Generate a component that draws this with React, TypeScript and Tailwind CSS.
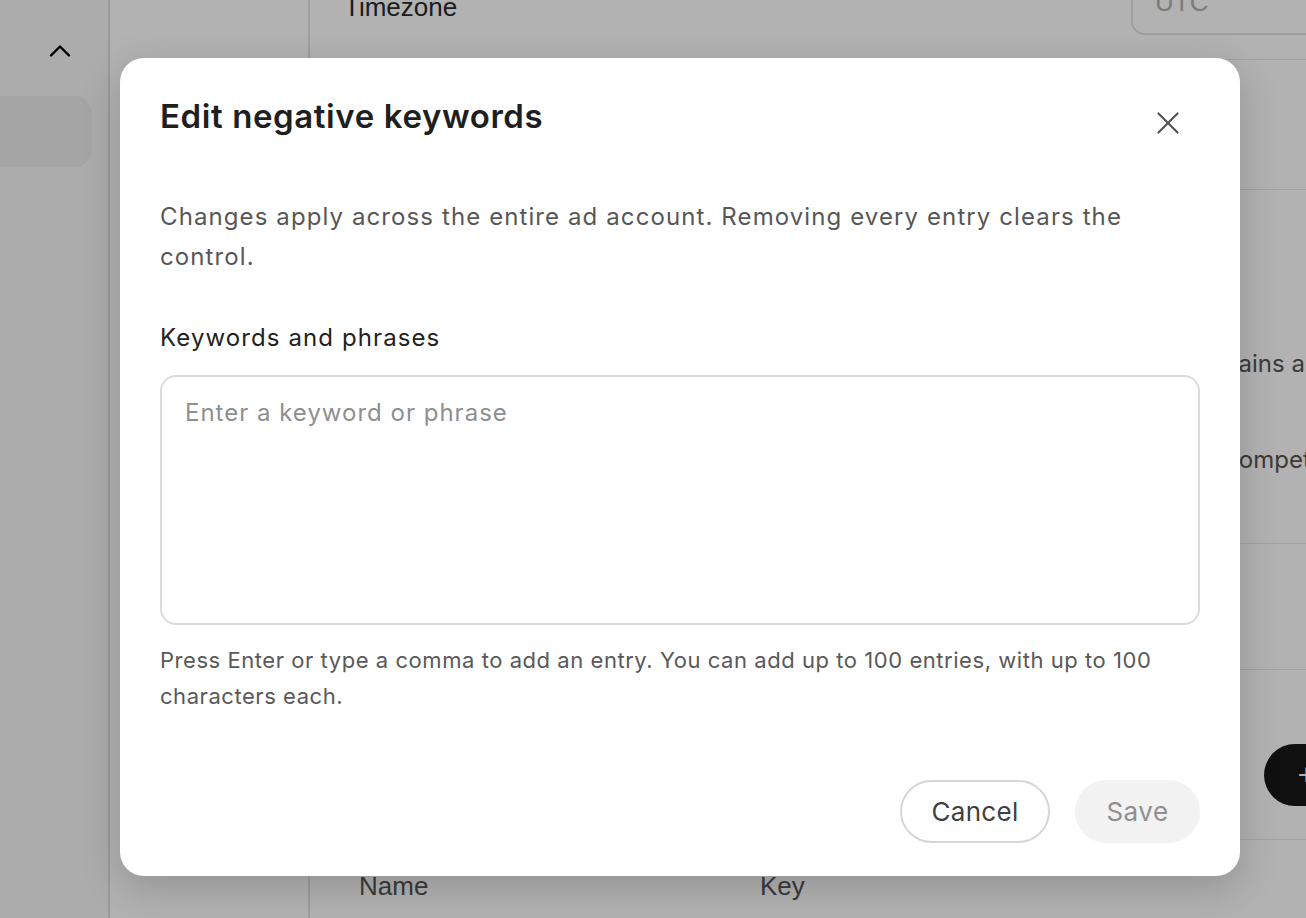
import { ChevronUp } from "lucide-react";

const inter = { fontFamily: "Inter, 'Noto Sans', sans-serif" };

export default function App() {
  return (
    <div
      className="relative w-[1306px] h-[918px] overflow-hidden bg-white"
      style={{ fontFamily: "'Liberation Sans', Arial, sans-serif" }}
    >
      {/* page behind the dialog */}
      <div className="flex h-full">
        <aside className="w-[110px] shrink-0 bg-[#f7f7f7] border-r-2 border-[#dcdcdc] pt-[33px]">
          <div className="flex justify-end pr-[30px]">
            <ChevronUp size={36} strokeWidth={1.6} className="text-black" />
          </div>
          <div className="mt-[27px] mr-[16px] h-[71px] rounded-r-[18px] bg-[#ececec]" />
        </aside>
        <nav className="w-[200px] shrink-0 border-r-2 border-[#e3e3e3]" />
        <main className="w-[1100px] shrink-0 -mt-[40px] text-[#2a2a2a]">
          <div className="h-[100px] flex items-center justify-between pl-[34px] pr-[36px] border-b border-[#e8e8e8]">
            <span className="text-[26px] mt-[-4px]">Timezone</span>
            <div className="w-[243px] h-[64px] mt-[-14px] rounded-[14px] border-2 border-[#e3e3e3] flex items-center px-[22px] text-[26px] text-[#b0b0b0]">
              UTC
            </div>
          </div>
          <div className="h-[130px] border-b border-[#e8e8e8]" />
          <div className="h-[354px] border-b border-[#e8e8e8] pl-[36px] pt-[156px]" style={inter}>
            <p className="text-[24px] leading-[36px] text-[#555] whitespace-nowrap pl-[477px]">
              Exclude placements on specific domains and apps
            </p>
            <p className="mt-[60px] text-[24px] leading-[36px] text-[#555] whitespace-nowrap pl-[561px]">
              Hide your ads next to these competitors
            </p>
          </div>
          <div className="h-[126px] border-b border-[#e8e8e8]" />
          <div className="h-[170px] border-b border-[#e8e8e8] flex items-center justify-end pr-[10px]">
            <button className="h-[62px] mt-[40px] rounded-full bg-[#181818] text-white text-[24px] pl-[34px] pr-[30px] flex items-center gap-3">
              <span className="text-[30px] leading-none">+</span>
              Add
            </button>
          </div>
          <div className="flex pl-[49px] pt-[27px] text-[26px] text-[#555]">
            <span className="w-[401px]">Name</span>
            <span>Key</span>
          </div>
        </main>
      </div>

      {/* overlay + dialog */}
      <div className="absolute inset-0 bg-black/30 pl-[120px] pt-[58px]" style={inter}>
        <div className="w-[1120px] rounded-[24px] bg-white px-[40px] pt-[38px] pb-[33px] shadow-[0_12px_40px_rgba(0,0,0,0.18)]">
          <div className="flex items-start justify-between">
            <h2 className="text-[33px] leading-[40px] font-semibold text-[#1f1f1f] tracking-[0.6px]">
              Edit negative keywords
            </h2>
            <button className="mt-[16px] mr-[21px] text-[#555]">
              <svg width="22" height="22" viewBox="0 0 22 22" fill="none" stroke="currentColor" strokeWidth="2.2" strokeLinecap="round">
                <path d="M1.5 1.5l19 19M20.5 1.5l-19 19" />
              </svg>
            </button>
          </div>

          <p className="mt-[61px] text-[24px] leading-[40px] text-[#575757] tracking-[1.1px] pr-[40px]">
            Changes apply across the entire ad account. Removing every entry clears the control.
          </p>

          <label className="block mt-[43px] text-[24px] leading-[36px] text-[#222] tracking-[1.1px]">
            Keywords and phrases
          </label>
          <textarea
            placeholder="Enter a keyword or phrase"
            className="block mt-[19px] w-full h-[250px] resize-none rounded-[16px] border-2 border-[#dcdcdc] px-[23px] pt-[18px] text-[24px] leading-[36px] tracking-[1px] text-[#222] placeholder:text-[#8f8f8f] outline-none"
          />

          <p className="mt-[17px] text-[22px] leading-[36px] text-[#595959] tracking-[0.55px]">
            Press Enter or type a comma to add an entry. You can add up to 100 entries, with up to 100 characters each.
          </p>

          <div className="mt-[66px] flex justify-end gap-[25px]">
            <button className="h-[63px] w-[150px] rounded-full border-2 border-[#d6d6d6] text-[26px] text-[#404040] tracking-[0.3px]">
              Cancel
            </button>
            <button className="h-[63px] w-[125px] rounded-full bg-[#f2f2f2] text-[26px] text-[#8f8f8f] tracking-[0.5px]">
              Save
            </button>
          </div>
        </div>
      </div>
    </div>
  );
}
